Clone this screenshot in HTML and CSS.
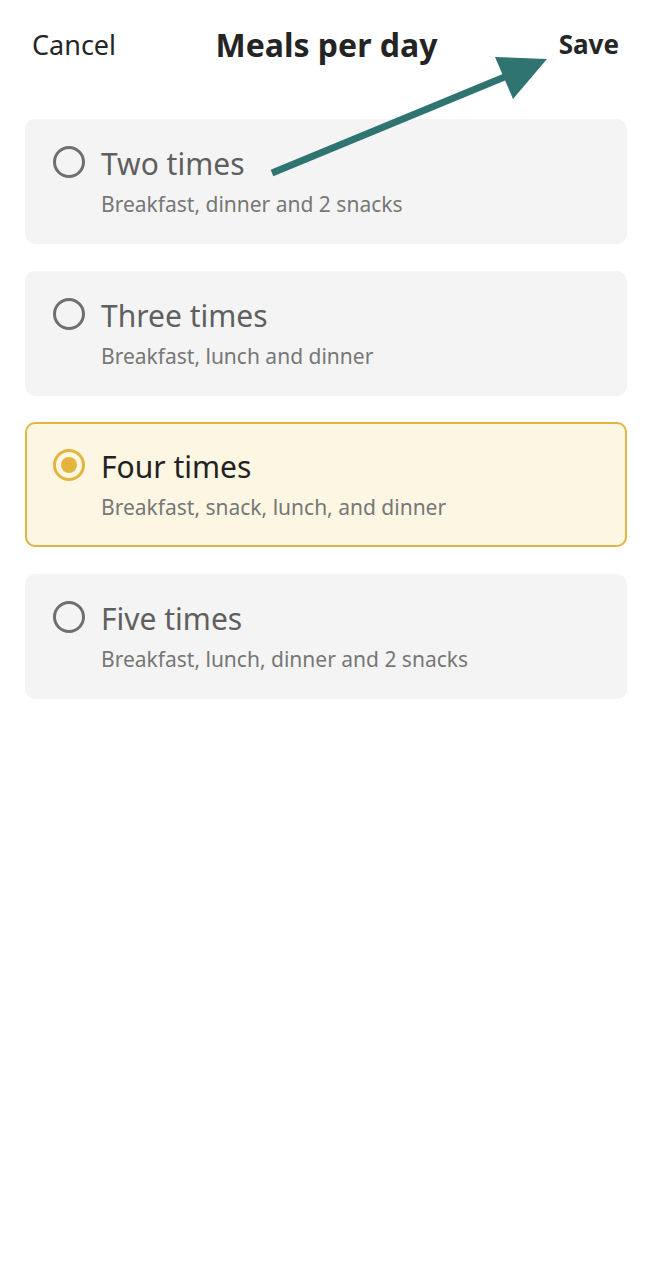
FILE: index.html
```html
<!DOCTYPE html>
<html lang="en">
<head>
<meta charset="utf-8">
<link rel="stylesheet" href="styles.css">
</head>
<body>
<div class="page">
  <header class="topbar">
    <span class="cancel">Cancel</span>
    <h1 class="title">Meals per day</h1>
    <span class="save">Save</span>
  </header>
  <main class="options">
    <div class="option">
      <span class="radio"></span>
      <div class="text">
        <div class="opt-title">Two times</div>
        <div class="opt-sub">Breakfast, dinner and 2 snacks</div>
      </div>
    </div>
    <div class="option">
      <span class="radio"></span>
      <div class="text">
        <div class="opt-title">Three times</div>
        <div class="opt-sub">Breakfast, lunch and dinner</div>
      </div>
    </div>
    <div class="option selected">
      <span class="radio"></span>
      <div class="text">
        <div class="opt-title">Four times</div>
        <div class="opt-sub">Breakfast, snack, lunch, and dinner</div>
      </div>
    </div>
    <div class="option">
      <span class="radio"></span>
      <div class="text">
        <div class="opt-title">Five times</div>
        <div class="opt-sub">Breakfast, lunch, dinner and 2 snacks</div>
      </div>
    </div>
  </main>
  <svg class="arrow" width="653" height="200" viewBox="0 0 653 200">
    <line x1="272" y1="173" x2="512" y2="74" stroke="#2f7471" stroke-width="7"/>
    <polygon points="547,59 495,57 513,99" fill="#2f7471"/>
  </svg>
</div>
</body>
</html>
```

FILE: styles.css
```css
html, body {
  margin: 0;
  padding: 0;
  background: #ffffff;
}
.page {
  position: relative;
  width: 653px;
  min-height: 1280px;
  font-family: "Noto Sans", "Open Sans", sans-serif;
}
.topbar {
  display: grid;
  grid-template-columns: 1fr auto 1fr;
  align-items: center;
  height: 88px;
  padding: 0 34px 0 32px;
  box-sizing: border-box;
}
.cancel {
  justify-self: start;
  font-size: 27px;
  color: #262626;
}
.title {
  margin: 0;
  font-size: 32px;
  font-weight: 700;
  color: #242424;
  padding-left: 2px;
}
.save {
  justify-self: end;
  font-size: 26px;
  font-weight: 700;
  color: #262626;
}
.options {
  display: flex;
  flex-direction: column;
  gap: 26.5px;
  padding: 31px 26px 0 25px;
}
.option {
  display: flex;
  align-items: flex-start;
  gap: 16px;
  background: #f4f4f4;
  border-radius: 10px;
  padding: 26px 26px 26px 26px;
  height: 125px;
  box-sizing: border-box;
  border: 2px solid transparent;
}
.option .radio {
  flex: none;
  width: 32px;
  height: 32px;
  box-sizing: border-box;
  border: 3px solid #6f6f6f;
  border-radius: 50%;
  margin-top: -1px;
  position: relative;
}
.text {
  display: flex;
  flex-direction: column;
}
.opt-title {
  font-size: 30px;
  line-height: 36px;
  color: #5f5f5f;
  margin-top: -1px;
}
.opt-sub {
  font-size: 21px;
  line-height: 30px;
  color: #777777;
  margin-top: 7px;
}
.option.selected {
  background: #fdf6e2;
  border: 2.5px solid #e3b43f;
}
.option.selected .radio {
  border-color: #e3b43f;
}
.option.selected .radio::after {
  content: "";
  position: absolute;
  left: 5px;
  top: 5px;
  width: 16px;
  height: 16px;
  border-radius: 50%;
  background: #e3b43f;
}
.option.selected .opt-title {
  color: #222222;
}
.arrow {
  position: absolute;
  left: 0;
  top: 0;
  pointer-events: none;
}
```
